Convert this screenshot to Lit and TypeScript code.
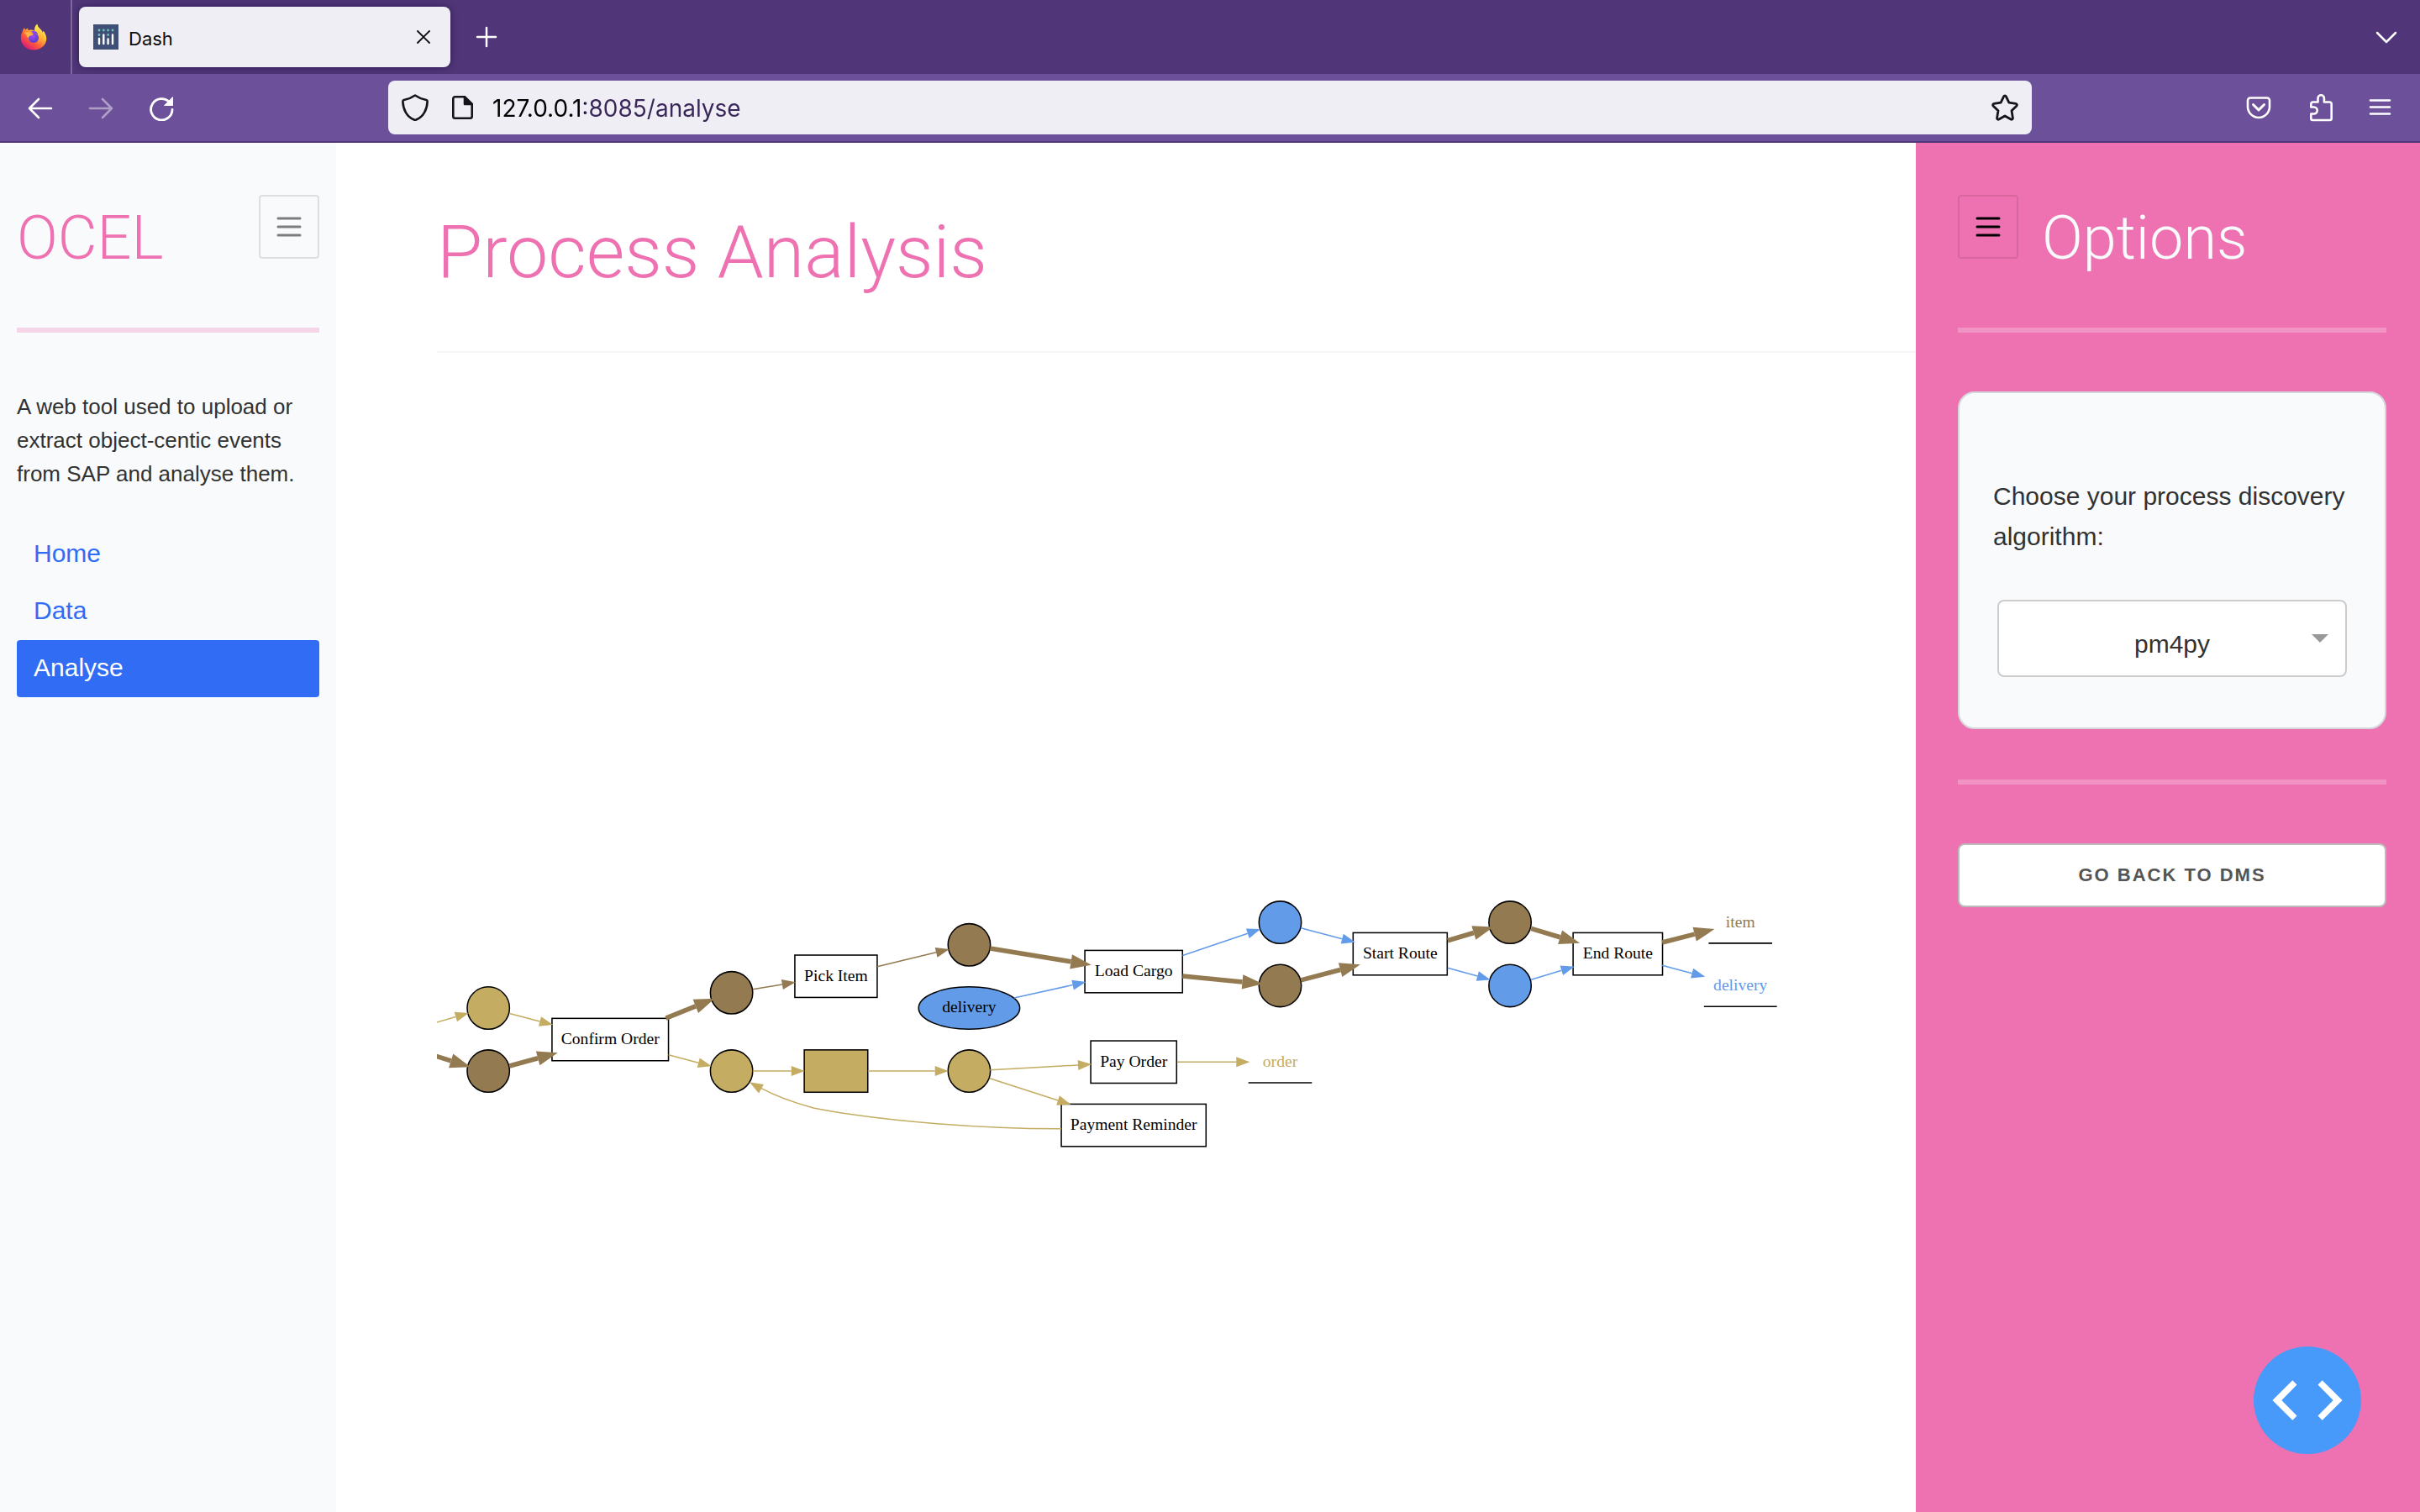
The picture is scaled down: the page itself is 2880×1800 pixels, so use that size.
import { LitElement, html, svg, css } from "lit";
import { customElement, state } from "lit/decorators.js";

const GOLD = "#c4ac62";
const BROWN = "#937a51";
const BLUE = "#629be8";

type Place = { x: number; y: number; fill: string };
type Step = { x: number; y: number; w: number; label: string; fill?: string };
type Sink = { x: number; y: number; w: number; label: string; color: string };
type Edge = { from: [number, number]; to: [number, number]; color: string; heavy?: boolean };

const PLACES: Place[] = [
  { x: 43.7, y: 557.1, fill: GOLD },
  { x: 43.7, y: 610.7, fill: BROWN },
  { x: 250.4, y: 544.1, fill: BROWN },
  { x: 250.4, y: 610.7, fill: GOLD },
  { x: 452.4, y: 503.4, fill: BROWN },
  { x: 452.4, y: 610.7, fill: GOLD },
  { x: 716.7, y: 484.3, fill: BLUE },
  { x: 716.7, y: 538.1, fill: BROWN },
  { x: 912.1, y: 484.3, fill: BROWN },
  { x: 912.1, y: 538.1, fill: BLUE },
];

const STEPS: Step[] = [
  { x: 147.3, y: 583.9, w: 99, label: "Confirm Order" },
  { x: 339.2, y: 530.1, w: 70, label: "Pick Item" },
  { x: 339.2, y: 610.7, w: 54, label: "", fill: GOLD },
  { x: 592.2, y: 526.1, w: 83, label: "Load Cargo" },
  { x: 592.2, y: 603, w: 73, label: "Pay Order" },
  { x: 592.2, y: 656.8, w: 123, label: "Payment Reminder" },
  { x: 818.7, y: 511.1, w: 80, label: "Start Route" },
  { x: 1003.7, y: 511.1, w: 76, label: "End Route" },
];

const SINKS: Sink[] = [
  { x: 716.7, y: 602.6, w: 54, label: "order", color: GOLD },
  { x: 1107.9, y: 484, w: 54, label: "item", color: BROWN },
  { x: 1107.9, y: 537.8, w: 62, label: "delivery", color: BLUE },
];

const EDGES: Edge[] = [
  { from: [-2, 569.8], to: [27, 561.4], color: GOLD },
  { from: [61.7, 561.7], to: [98.6, 571.4], color: GOLD },
  { from: [-4, 597], to: [28.6, 607.2], color: BROWN, heavy: true },
  { from: [61.7, 606.4], to: [102.7, 595.2], color: BROWN, heavy: true },
  { from: [194.6, 565.7], to: [236.1, 549], color: BROWN, heavy: true },
  { from: [268.4, 541.2], to: [304.8, 535.2], color: BROWN },
  { from: [374.2, 521.9], to: [435.5, 507.1], color: BROWN },
  { from: [196.8, 596.9], to: [233.4, 606.6], color: GOLD },
  { from: [268.4, 610.7], to: [312.7, 610.7], color: GOLD },
  { from: [366.3, 610.7], to: [434.8, 610.7], color: GOLD },
  { from: [470.2, 506.4], to: [556.2, 520.5], color: BROWN, heavy: true },
  { from: [490.5, 548.6], to: [551.6, 535], color: BLUE },
  { from: [470.2, 609.8], to: [556.4, 605], color: GOLD },
  { from: [469.8, 616.9], to: [538.8, 639.1], color: GOLD },
  { from: [633.8, 512.4], to: [700, 490], color: BLUE },
  { from: [633.8, 530], to: [702, 536.6], color: BROWN, heavy: true },
  { from: [629.1, 602.9], to: [690.9, 602.9], color: GOLD },
  { from: [734.3, 489.1], to: [780.5, 501.2], color: BLUE },
  { from: [734.3, 533.4], to: [784.8, 520.2], color: BROWN, heavy: true },
  { from: [859.1, 499.8], to: [898, 488.1], color: BROWN, heavy: true },
  { from: [859.1, 522.9], to: [895.5, 533.1], color: BLUE },
  { from: [930, 489.5], to: [971.4, 501.9], color: BROWN, heavy: true },
  { from: [930, 532.9], to: [966.9, 521.9], color: BLUE },
  { from: [1041.4, 501.4], to: [1085.9, 490], color: BROWN, heavy: true },
  { from: [1041.4, 520.9], to: [1077.9, 530.5], color: BLUE },
];

function arrowHead(from: [number, number], tip: [number, number], color: string, heavy = false) {
  const length = heavy ? 17.5 : 11.5;
  const half = heavy ? 6.2 : 4.3;
  const dist = Math.hypot(tip[0] - from[0], tip[1] - from[1]);
  const ux = (tip[0] - from[0]) / dist;
  const uy = (tip[1] - from[1]) / dist;
  const bx = tip[0] - ux * length;
  const by = tip[1] - uy * length;
  const points = [
    tip.join(","),
    `${bx - uy * half},${by + ux * half}`,
    `${bx + uy * half},${by - ux * half}`,
  ].join(" ");
  return { bx, by, shape: svg`<polygon points=${points} fill=${color} />` };
}

@customElement("process-net")
export class ProcessNet extends LitElement {
  static styles = css`
    :host { display: block; min-height: 0; }
    .net { display: block; width: 100%; height: 100%; }
    .outline { stroke: #000; stroke-width: 1.1; }
    .label {
      font-family: "Liberation Serif", "Times New Roman", serif;
      font-size: 14px;
      text-anchor: middle;
    }
  `;

  render() {
    return html`
      <svg class="net" viewBox="0 0 1257 986" preserveAspectRatio="xMinYMid meet" role="img" aria-label="Process model">
        ${PLACES.map((p) => svg`<circle class="outline" cx=${p.x} cy=${p.y} r="18" fill=${p.fill} />`)}
        <ellipse class="outline" cx="452.4" cy="557.1" rx="43" ry="18" fill=${BLUE} />
        <text class="label" x="452.4" y="561">delivery</text>
        ${STEPS.map((s) => svg`
          <rect class="outline" x=${s.x - s.w / 2} y=${s.y - 18} width=${s.w} height="36" fill=${s.fill ?? "#fff"} />
          <text class="label" x=${s.x} y=${s.y + 4}>${s.label}</text>`)}
        ${SINKS.map((s) => svg`
          <line class="outline" x1=${s.x - s.w / 2} x2=${s.x + s.w / 2} y1=${s.y + 18} y2=${s.y + 18} />
          <text class="label" x=${s.x} y=${s.y + 4.3} fill=${s.color}>${s.label}</text>`)}
        ${EDGES.map((e) => {
          const head = arrowHead(e.from, e.to, e.color, e.heavy);
          return svg`
            <line x1=${e.from[0]} y1=${e.from[1]} x2=${head.bx} y2=${head.by}
              stroke=${e.color} stroke-width=${e.heavy ? 4 : 1.1} />
            ${head.shape}`;
        })}
        <path d="M530.7 659.8 C470 660 380 654 320 642 C303 637.5 290 633 275 625"
          fill="none" stroke=${GOLD} stroke-width="1.1" />
        ${arrowHead([275.5, 625.7], [265.6, 620.2], GOLD).shape}
      </svg>
    `;
  }
}

@customElement("browser-chrome")
export class BrowserChrome extends LitElement {
  static styles = css`
    :host { display: block; font-family: Inter, "Liberation Sans", sans-serif; }
    svg { display: block; fill: none; stroke: currentColor; stroke-linecap: round; stroke-linejoin: round; }
    button { display: block; border: 0; padding: 0; margin: 0; background: none; color: inherit; }
    .tabs {
      display: flex;
      align-items: center;
      height: 88px;
      background: #503678;
      color: #fff;
    }
    .pinned {
      display: flex;
      align-items: center;
      box-sizing: border-box;
      width: 86px;
      height: 88px;
      padding-left: 24px;
      border-right: 2px solid #7d679c;
    }
    .logo { stroke: none; }
    .tab {
      display: flex;
      align-items: center;
      box-sizing: border-box;
      width: 442px;
      height: 72px;
      margin: 0 28px 0 8px;
      padding: 0 22px 0 17px;
      border-radius: 8px;
      background: #f0eef5;
      box-shadow: 0 0 8px rgba(20, 0, 50, 0.5);
      color: #0c0c0d;
      font-size: 22px;
      line-height: 32px;
    }
    .name { flex: 1; margin-left: 12px; padding-top: 4px; }
    .list { margin-left: auto; margin-right: 24px; }
    .bar {
      display: flex;
      align-items: center;
      box-sizing: border-box;
      height: 82px;
      padding: 0 30px 0 32px;
      background: #6c5099;
      border-bottom: 2px solid #503678;
      color: #fff;
    }
    .nav { display: flex; gap: 40px; width: 430px; }
    .off { opacity: 0.45; }
    .address {
      display: flex;
      align-items: center;
      flex: 1;
      height: 64px;
      padding: 0 14px;
      border-radius: 8px;
      background: #f0eef5;
      color: #15141a;
    }
    .url {
      flex: 1;
      min-width: 0;
      height: 48px;
      margin: 0 0 0 22px;
      padding: 2px 0 0;
      border: 0;
      outline: 0;
      font-family: Inter, "Liberation Sans", sans-serif;
      font-size: 28px;
      color: transparent;
      background: linear-gradient(to right, #000 110px, #39275a 110px);
      -webkit-background-clip: text;
      background-clip: text;
    }
    .gap { margin-left: 24px; }
    .tools { display: flex; gap: 38px; margin-left: 252px; }
  `;

  render() {
    return html`
      <div class="tabs">
        <div class="pinned">
          <svg class="logo" width="32" height="32" viewBox="0 0 32 32">
            <defs>
              <linearGradient id="fire" x1="0.85" y1="0.1" x2="0.2" y2="0.95">
                <stop offset="0.05" stop-color="#fff44f" />
                <stop offset="0.4" stop-color="#ffa436" />
                <stop offset="0.65" stop-color="#ff5a3c" />
                <stop offset="1" stop-color="#d8177a" />
              </linearGradient>
              <radialGradient id="globe" cx="0.4" cy="0.3" r="0.8">
                <stop offset="0" stop-color="#a04cf0" />
                <stop offset="1" stop-color="#4a3bc9" />
              </radialGradient>
              <linearGradient id="flame" x1="0.5" y1="0" x2="0.5" y2="1">
                <stop offset="0" stop-color="#fff44f" />
                <stop offset="1" stop-color="#ff9030" />
              </linearGradient>
            </defs>
            <path fill="url(#fire)" d="M3 9c.3-1.600 1-3 2.200-4 .1 1.100.4 1.900 1 2.600.9-.9 1.900-1.600 3.200-2-.3 1-.2 1.700.1 2.500 2.500-1 5-1 7.500.3C17.200 5 17.800 2.500 20.300.8c.2 2.300 1.400 3.600 3.200 5.200 1.700 1.500 2.800 3 3.200 4.700.5-.6.800-1.300.800-2.200 2.600 3.400 4 7.200 3.800 10.300C30.700 26 24.500 31.500 16 31.500S.8 25.500.8 17.500c0-3.200.8-6 2.200-8.500z" />
            <circle cx="16" cy="17" r="6" fill="url(#globe)" />
            <path fill="url(#flame)" d="M20.300.8c-3 2.500-3.400 5.700-1.600 8.200 2.600 1 5 3.700 5 7.500 0 3-1.300 5.300-3.500 6.800 4.500-.8 7.600-4.600 7.300-9.300-.3-5.600-6.700-7.400-7.200-13.200z" opacity="0.85" />
            <path fill="url(#globe)" d="M13 9.500c1.500-1.200 4.500-1.200 6.200.3 1 .9 1.600 2 1.800 3-1.500-1.300-3.500-1.600-5-1z" />
            <path fill="#ffb340" d="M4.500 11.500c2.500-1.800 5.500-2 7.500-.4.900.7 2.500.8 3.800.9-.3 1.700-1.800 2.300-3.500 2.600-1.200.3-2 1-2.300 2.400-1.600-.4-2.600-1.700-2.500-3.500-1-.9-2-1.500-3-2z" />
          </svg>
        </div>
        <div class="tab">
          <svg width="30" height="30" viewBox="0 0 30 30">
            <rect width="30" height="30" fill="#3f4f75" stroke="none" />
            <g stroke="#fff" stroke-width="2.400">
              <path d="M7 17v6M12.300 12.500V23M17.600 17.500V23M23 12.500V23" />
            </g>
            <g fill="#6fc3bd" stroke="none">
              <circle cx="7" cy="7" r="1.400" /><circle cx="12.300" cy="7" r="1.400" />
              <circle cx="17.600" cy="7" r="1.400" /><circle cx="23" cy="7" r="1.400" />
              <circle cx="7" cy="12.500" r="1.400" /><circle cx="17.600" cy="12.500" r="1.400" />
            </g>
          </svg>
          <span class="name">Dash</span>
          <button aria-label="Close tab">
            <svg width="20" height="20" viewBox="0 0 20 20" stroke-width="1.800"><path d="M3 3l14 14M17 3L3 17" /></svg>
          </button>
        </div>
        <button aria-label="New tab">
          <svg width="30" height="30" viewBox="0 0 30 30" stroke-width="2.500"><path d="M15 4v22M4 15h22" /></svg>
        </button>
        <button class="list" aria-label="List all tabs">
          <svg width="32" height="32" viewBox="0 0 32 32" stroke-width="2.500"><path d="M5 11l11 11 11-11" /></svg>
        </button>
      </div>
      <div class="bar">
        <div class="nav">
          <button aria-label="Back">
            <svg width="32" height="32" viewBox="0 0 32 32" stroke-width="2.600"><path d="M29 17H3M14 6L3 17l11 11" /></svg>
          </button>
          <button class="off" aria-label="Forward">
            <svg width="32" height="32" viewBox="0 0 32 32" stroke-width="2.600"><path d="M3 17h26M18 6l11 11-11 11" /></svg>
          </button>
          <button aria-label="Reload">
            <svg width="32" height="32" viewBox="0 0 32 32" stroke-width="2.800">
              <path d="M29 18.500A12.700 12.700 0 1 1 25.500 9.500" />
              <path d="M29.500 4v9.500H20z" fill="currentColor" stroke-width="1" />
            </svg>
          </button>
        </div>
        <div class="address">
          <svg width="36" height="36" viewBox="0 0 36 36" stroke-width="2.600">
            <path d="M18 3.500c3.800 2.700 8.500 4.600 13.300 5.600 1 .2 1.400 1 1.300 2C32.300 20 28 29 19.300 32.500c-.9.4-1.700.4-2.600 0C8 29 3.700 20 3.400 11.100c-.1-1 .3-1.800 1.300-2C9.500 8.100 14.200 6.200 18 3.500z" />
          </svg>
          <svg class="gap" width="28" height="32" viewBox="0 0 28 32" stroke-width="2.600">
            <path d="M5.500 3.300h11.500l8.700 8.700v14.500a2.200 2.200 0 0 1-2.200 2.200h-18a2.200 2.200 0 0 1-2.200-2.200v-21a2.200 2.200 0 0 1 2.200-2.200z" />
            <path d="M17 3.300V12h8.700z" fill="currentColor" />
          </svg>
          <input class="url" type="text" aria-label="Address" .value=${"127.0.0.1:8085/analyse"} />
          <button aria-label="Bookmark this page">
            <svg width="36" height="36" viewBox="0 0 36 36" stroke-width="2.800">
              <path d="M16.600 4.800c.6-1.300 2.200-1.300 2.800 0l3.500 7.400 8 1.100c1.500.2 2 1.800.9 2.900L26 21.800l1.400 8.600c.2 1.300-1.100 2.300-2.300 1.600L18 28l-7.100 4c-1.200.7-2.500-.3-2.300-1.600L10 21.800l-5.800-5.600c-1.100-1.100-.6-2.700.9-2.900l8-1.100z" />
            </svg>
          </button>
        </div>
        <div class="tools">
          <button aria-label="Save to Pocket">
            <svg width="36" height="36" viewBox="0 0 36 36" stroke-width="2.600">
              <path d="M8 6.500h20a3 3 0 0 1 3 3V17a13 13 0 0 1-26 0V9.500a3 3 0 0 1 3-3z" />
              <path d="M11.500 14.500L18 21l6.500-6.500" stroke-width="3" />
            </svg>
          </button>
          <button aria-label="Extensions">
            <svg width="36" height="36" viewBox="0 0 36 36" stroke-width="2.600">
              <path d="M6.300 17.500V14a2.500 2.500 0 0 1 2.500-2.500H14.500V7a3.700 3.700 0 0 1 7.400 0v4.500h6.300a2.500 2.500 0 0 1 2.500 2.500v17a2 2 0 0 1-2 2H8.300a2 2 0 0 1-2-2V25.500h3.400a4 4 0 0 0 0-8z" />
            </svg>
          </button>
          <button aria-label="Open application menu">
            <svg width="32" height="36" viewBox="0 0 32 36" stroke-width="2.600"><path d="M3 9.500h23M3 17.500h23M3 25.500h23" /></svg>
          </button>
        </div>
      </div>
    `;
  }
}

@customElement("app-root")
export class AppRoot extends LitElement {
  static styles = css`
    :host { display: block; font-family: "Liberation Sans", Arial, sans-serif; color: #323232; }
    .window { display: flex; flex-direction: column; min-height: 100vh; }
    .page { flex: 1; display: grid; grid-template-columns: 400px minmax(0, 1fr) 600px; }
    h1, h2, p, hr { margin: 0; border: 0; }
    h1, h2 { font-family: Roboto, "Liberation Sans", sans-serif; font-weight: 300; white-space: nowrap; }
    .side { padding: 62px 20px; background: #f8fafc; }
    .head { display: flex; align-items: flex-start; height: 158px; }
    .brand { flex: 1; padding-top: 12px; font-size: 72px; line-height: 80px; color: #ee72b1; }
    .toggle {
      display: flex;
      align-items: center;
      justify-content: center;
      box-sizing: border-box;
      width: 72px;
      height: 76px;
      padding: 0;
      border: 2px solid #dcdfe1;
      border-radius: 4px;
      background: none;
      color: #7b7c7c;
    }
    .toggle svg { display: block; stroke: currentColor; stroke-width: 3; stroke-linecap: round; }
    .rule { height: 6px; background: #f5d6e8; }
    .about { padding: 68px 0 42px; font-size: 26px; line-height: 40px; }
    .menu { display: flex; flex-direction: column; }
    .link {
      padding: 15px 20px 17px;
      border-radius: 4px;
      font-size: 30px;
      line-height: 36px;
      color: #306cf4;
      text-decoration: none;
    }
    .link.active { background: #306cf4; color: #fff; }
    .main { display: flex; flex-direction: column; padding: 80px 0 0 120px; background: #fff; }
    .title { padding-bottom: 68px; font-size: 88px; line-height: 100px; color: #ee72b1; }
    .line { height: 2px; background: #f6f6f7; }
    .net { flex: 1; }
    .options { position: relative; padding: 62px 40px 62px 50px; background: #ee72b1; }
    .options .toggle { border-color: #d8679f; color: #000; }
    .options .rule { background: #f193c3; }
    .caption { padding: 12px 0 0 28px; font-size: 72px; line-height: 80px; color: #f8fafc; }
    .card {
      margin: 70px 0 60px;
      padding: 99px 40px 60px;
      border: 2px solid #d5d8db;
      border-radius: 20px;
      background: #f8fafc;
    }
    .ask { display: block; font-size: 30px; line-height: 48px; }
    .picker { position: relative; margin: 51px 5px 0; }
    .select {
      display: block;
      appearance: none;
      box-sizing: border-box;
      width: 100%;
      height: 92px;
      padding: 12px 32px 0;
      border: 2px solid #ccc;
      border-radius: 8px;
      background: #fff;
      color: #323232;
      font-family: inherit;
      font-size: 30px;
      text-align: center;
      text-align-last: center;
    }
    .caret { position: absolute; right: 22px; top: 41px; fill: #999; pointer-events: none; }
    .back {
      display: block;
      box-sizing: border-box;
      width: 100%;
      height: 76px;
      margin-top: 70px;
      padding: 0;
      border: 2px solid #bbb;
      border-radius: 8px;
      background: #fff;
      color: #555;
      font-family: inherit;
      font-size: 22px;
      font-weight: 700;
      letter-spacing: 2px;
      text-transform: uppercase;
    }
    .debug {
      position: absolute;
      right: 70px;
      bottom: 70px;
      width: 128px;
      height: 128px;
      padding: 0;
      border: 0;
      border-radius: 50%;
      background: #489afa;
    }
    .debug svg { display: block; fill: #fff; }
  `;

  @state() private current = "Analyse";

  private bars() {
    return html`<svg width="30" height="26" viewBox="0 0 30 26"><path d="M2 3h26M2 13h26M2 23h26" /></svg>`;
  }

  render() {
    return html`
      <div class="window">
        <browser-chrome></browser-chrome>
        <div class="page">
          <aside class="side">
            <div class="head">
              <h2 class="brand">OCEL</h2>
              <button class="toggle" aria-label="Toggle sidebar">${this.bars()}</button>
            </div>
            <hr class="rule" />
            <p class="about">A web tool used to upload or extract object-centic events from SAP and analyse them.</p>
            <nav class="menu">
              ${["Home", "Data", "Analyse"].map((name) => html`
                <a class=${name === this.current ? "link active" : "link"} href="#${name.toLowerCase()}"
                  @click=${() => (this.current = name)}>${name}</a>`)}
            </nav>
          </aside>
          <main class="main">
            <h1 class="title">Process Analysis</h1>
            <hr class="line" />
            <process-net class="net"></process-net>
          </main>
          <aside class="options">
            <div class="head">
              <button class="toggle" aria-label="Toggle options">${this.bars()}</button>
              <h2 class="caption">Options</h2>
            </div>
            <hr class="rule" />
            <div class="card">
              <label class="ask" for="algorithm">Choose your process discovery algorithm:</label>
              <div class="picker">
                <select class="select" id="algorithm"><option>pm4py</option></select>
                <svg class="caret" width="20" height="10" viewBox="0 0 20 10"><path d="M0 0h20L10 10z" /></svg>
              </div>
            </div>
            <hr class="rule" />
            <button class="back">Go back to DMS</button>
            <button class="debug" aria-label="Developer tools">
              <svg width="128" height="128" viewBox="0 0 128 128">
                <path d="M51.500 45.400L46.300 40.200 22.400 64l23.900 23.800 5.200-5.200L33.300 64zM76.500 45.400l5.200-5.200L105.600 64 81.700 87.800l-5.200-5.200L94.700 64z" />
              </svg>
            </button>
          </aside>
        </div>
      </div>
    `;
  }
}
